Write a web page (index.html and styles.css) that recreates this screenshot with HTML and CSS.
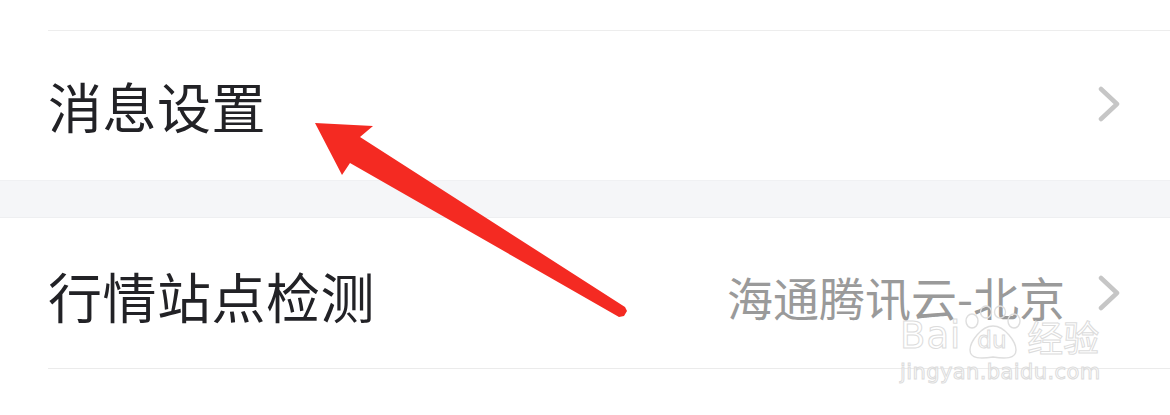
FILE: index.html
```html
<!DOCTYPE html>
<html lang="zh-CN">
<head>
<meta charset="utf-8">
<link rel="stylesheet" href="styles.css">
</head>
<body>
<div class="page">
  <div class="spacer"></div>
  <div class="row row-first">
    <span class="label">消息设置</span>
    <svg class="chev" width="22" height="36" viewBox="0 0 22 36"><polyline points="3,3 19,18 3,33" fill="none" stroke="#c6c6c6" stroke-width="4.5" stroke-linecap="round" stroke-linejoin="round"/></svg>
  </div>
  <div class="band"></div>
  <div class="row row-last">
    <span class="label">行情站点检测</span>
    <span class="value">海通腾讯云-北京</span>
    <svg class="chev" width="22" height="36" viewBox="0 0 22 36"><polyline points="3,3 19,18 3,33" fill="none" stroke="#c6c6c6" stroke-width="4.5" stroke-linecap="round" stroke-linejoin="round"/></svg>
  </div>

  <svg class="arrow" width="1170" height="415" viewBox="0 0 1170 415">
    <polygon points="315,123 373,126 360,137 625,307 627,311 624,316 619,317 350,163 342,175" fill="#f42a22"/>
  </svg>

  <div class="watermark">
    <div class="wm-top">
      <span class="wm-bai">Bai</span>
      <span class="wm-paw">
        <svg width="64" height="56" viewBox="0 0 64 56">
          <g fill="none" stroke="#dedede" stroke-width="1.4">
            <ellipse cx="11" cy="16" rx="6" ry="7"/>
            <ellipse cx="25" cy="7" rx="5.5" ry="6"/>
            <ellipse cx="39" cy="7" rx="5.5" ry="6"/>
            <ellipse cx="53" cy="16" rx="6" ry="7"/>
            <path d="M32 21 C20 21 9 37 9 45 C9 54 20 54 32 52 C44 54 55 54 55 45 C55 37 44 21 32 21 Z"/>
          </g>
        </svg>
        <span class="wm-du">du</span>
      </span>
      <span class="wm-jy">经验</span>
    </div>
    <div class="wm-url">jingyan.baidu.com</div>
  </div>
</div>
</body>
</html>
```
FILE: styles.css
```css
html, body {
  margin: 0;
  padding: 0;
  background: #ffffff;
}
.page {
  position: relative;
  width: 1170px;
  height: 415px;
  overflow: hidden;
  font-family: "Noto Sans CJK SC", "Noto Sans", sans-serif;
}
.spacer {
  height: 30px;
}
.row {
  margin-left: 48px;
  padding-right: 50px;
  display: flex;
  align-items: center;
}
.row-first {
  height: 149px;
  border-top: 1px solid #ededed;
}
.row-last {
  height: 150px;
  border-bottom: 1px solid #ebebeb;
}
.label {
  flex: 1;
  font-size: 54px;
  line-height: 1;
  color: #222226;
  letter-spacing: 0.5px;
}
.row-last .label {
  padding-top: 6px;
}
.value {
  font-size: 46px;
  line-height: 1;
  color: #9a9a9a;
  margin-right: 33px;
  padding-top: 6px;
}
.chev {
  display: block;
}
.row-first .chev {
  margin-top: -4px;
}
.band {
  height: 36px;
  background: #f5f6f8;
  border-top: 1px solid #f0f1f3;
  border-bottom: 1px solid #eeeff1;
}
.arrow {
  position: absolute;
  left: 0;
  top: 0;
  pointer-events: none;
}
.watermark {
  position: absolute;
  left: 900px;
  top: 310px;
  width: 210px;
  font-family: "DejaVu Sans", sans-serif;
  color: rgba(255,255,255,0.6);
  -webkit-text-stroke: 1px #dcdcdc;
}
.wm-top {
  display: flex;
  align-items: flex-end;
  height: 44px;
}
.wm-bai {
  font-size: 37px;
  line-height: 1;
  letter-spacing: 1px;
}
.wm-paw {
  position: relative;
  width: 64px;
  height: 56px;
  margin-bottom: -7px;
}
.wm-paw svg {
  position: absolute;
  left: 0;
  top: 0;
}
.wm-du {
  position: absolute;
  left: 16px;
  top: 24px;
  font-size: 23px;
  line-height: 1;
}
.wm-jy {
  font-family: "Noto Sans CJK SC", sans-serif;
  font-size: 36px;
  line-height: 1;
  margin-left: 2px;
}
.wm-url {
  margin-top: 8px;
  font-size: 21px;
  line-height: 1;
  letter-spacing: 0.4px;
  white-space: nowrap;
}
```
